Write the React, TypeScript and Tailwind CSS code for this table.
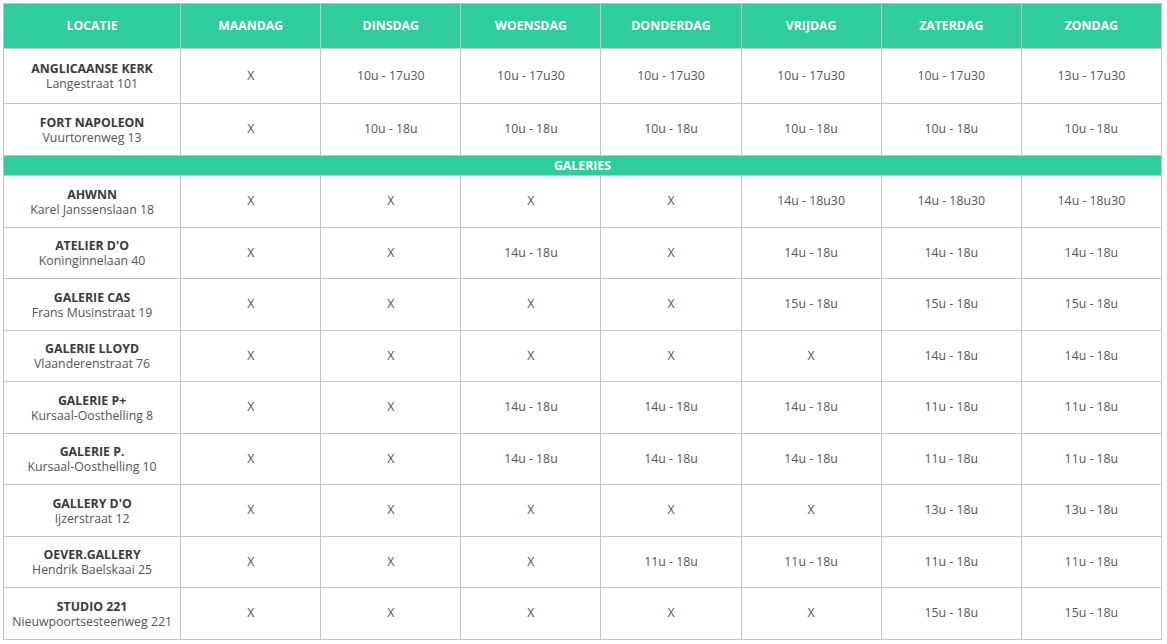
const days = ["MAANDAG", "DINSDAG", "WOENSDAG", "DONDERDAG", "VRIJDAG", "ZATERDAG", "ZONDAG"];

const musea = [
  { name: "ANGLICAANSE KERK", addr: "Langestraat 101", hours: ["X", "10u - 17u30", "10u - 17u30", "10u - 17u30", "10u - 17u30", "10u - 17u30", "13u - 17u30"], h: "h-[55px]" },
  { name: "FORT NAPOLEON", addr: "Vuurtorenweg 13", hours: ["X", "10u - 18u", "10u - 18u", "10u - 18u", "10u - 18u", "10u - 18u", "10u - 18u"], h: "h-[52px]" },
];

const galeries = [
  { name: "AHWNN", addr: "Karel Janssenslaan 18", hours: ["X", "X", "X", "X", "14u - 18u30", "14u - 18u30", "14u - 18u30"] },
  { name: "ATELIER D'O", addr: "Koninginnelaan 40", hours: ["X", "X", "14u - 18u", "X", "14u - 18u", "14u - 18u", "14u - 18u"] },
  { name: "GALERIE CAS", addr: "Frans Musinstraat 19", hours: ["X", "X", "X", "X", "15u - 18u", "15u - 18u", "15u - 18u"] },
  { name: "GALERIE LLOYD", addr: "Vlaanderenstraat 76", hours: ["X", "X", "X", "X", "X", "14u - 18u", "14u - 18u"] },
  { name: "GALERIE P+", addr: "Kursaal-Oosthelling 8", hours: ["X", "X", "14u - 18u", "14u - 18u", "14u - 18u", "11u - 18u", "11u - 18u"] },
  { name: "GALERIE P.", addr: "Kursaal-Oosthelling 10", hours: ["X", "X", "14u - 18u", "14u - 18u", "14u - 18u", "11u - 18u", "11u - 18u"] },
  { name: "GALLERY D'O", addr: "Ijzerstraat 12", hours: ["X", "X", "X", "X", "X", "13u - 18u", "13u - 18u"] },
  { name: "OEVER.GALLERY", addr: "Hendrik Baelskaai 25", hours: ["X", "X", "X", "11u - 18u", "11u - 18u", "11u - 18u", "11u - 18u"] },
  { name: "STUDIO 221", addr: "Nieuwpoortsesteenweg 221", hours: ["X", "X", "X", "X", "X", "15u - 18u", "15u - 18u"] },
];

function Row({ name, addr, hours, h }: { name: string; addr: string; hours: string[]; h: string }) {
  return (
    <tr className={h}>
      <td className="border border-[#c4c4c4] px-2 text-center leading-[15px]">
        <div className="font-bold text-[#3a3a3a]">{name}</div>
        <div className="text-[#555]">{addr}</div>
      </td>
      {hours.map((v, i) => (
        <td key={i} className="border border-[#c4c4c4] text-center text-[#555]">
          {v}
        </td>
      ))}
    </tr>
  );
}

export default function App() {
  return (
    <div className="h-[644px] w-[1167px] bg-white px-[3px] pt-[3px] font-['Open_Sans',sans-serif] text-[12.3px]">
      <table className="w-[1159px] table-fixed border-collapse">
        <colgroup>
          <col className="w-[177px]" />
          {days.map((d) => (
            <col key={d} className="w-[140px]" />
          ))}
        </colgroup>
        <thead>
          <tr className="h-[45px] bg-[#30cd9c] text-white">
            <th className="border border-[#c4c4c4] font-bold">LOCATIE</th>
            {days.map((d) => (
              <th key={d} className="border border-[#c4c4c4] font-bold">
                {d}
              </th>
            ))}
          </tr>
        </thead>
        <tbody>
          {musea.map((m) => (
            <Row key={m.name} {...m} />
          ))}
          <tr className="h-[20px] bg-[#30cd9c]">
            <td colSpan={8} className="border border-[#c4c4c4] text-center font-bold leading-[18px] text-white">
              GALERIES
            </td>
          </tr>
          {galeries.map((g, i) => (
            <Row key={g.name} {...g} h={i % 2 === 0 ? "h-[52px]" : "h-[51px]"} />
          ))}
        </tbody>
      </table>
    </div>
  );
}
